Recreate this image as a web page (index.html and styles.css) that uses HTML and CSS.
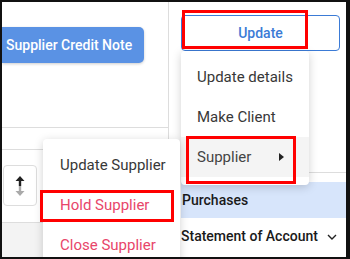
FILE: index.html
```html
<!DOCTYPE html>
<html lang="en">
<head>
    <meta charset="UTF-8">
    <title>Supplier actions</title>
    <link rel="stylesheet" href="styles.css">
</head>
<body>
    <div class="screen">
        <div class="left-panel">
            <div class="lp-top">
                <button class="btn-primary">Supplier Credit Note</button>
            </div>
            <div class="lp-row"></div>
            <div class="lp-sort">
                <div class="sort-box">
                    <svg width="12" height="22" viewBox="0 0 12 22">
                        <path d="M6 1 L1.5 6 H4.8 V11 H7.2 V6 H10.5 Z" fill="#222"/>
                        <path d="M6 21 L1.5 16 H4.8 V11 H7.2 V16 H10.5 Z" fill="#aaa"/>
                    </svg>
                </div>
            </div>
            <div class="lp-foot"></div>
        </div>

        <div class="right-panel">
            <button class="btn-outline">Update</button>
            <div class="rp-space"></div>
            <div class="rp-row active">Purchases</div>
            <div class="rp-row">Statement of Account
                <svg class="chev" width="10" height="6" viewBox="0 0 10 6">
                    <path d="M1 1 L5 5 L9 1" fill="none" stroke="#222" stroke-width="1.4"/>
                </svg>
            </div>
        </div>

        <ul class="menu menu-main">
            <li>Update details</li>
            <li>Make Client</li>
            <li class="hover">Supplier <span class="caret"></span></li>
        </ul>

        <ul class="menu menu-sub">
            <li>Update Supplier</li>
            <li class="danger">Hold Supplier</li>
            <li class="danger">Close Supplier</li>
        </ul>

        <div class="mark mark-update"></div>
        <div class="mark mark-supplier"></div>
        <div class="mark mark-hold"></div>
    </div>
</body>
</html>
```

FILE: styles.css
```css
* {
    box-sizing: border-box;
}

body {
    margin: 0;
    font-family: Roboto, 'Noto Sans', sans-serif;
    background: #fff;
}

.screen {
    position: relative;
    width: 350px;
    height: 259px;
    border-top: 2px solid #111;
    border-left: 2px solid #111;
    border-right: 4px solid #111;
    border-bottom: 2px solid #111;
    display: flex;
    overflow: hidden;
}

/* left side */
.left-panel {
    width: 167px;
    border-right: 1px solid #ddd;
    display: flex;
    flex-direction: column;
}

.lp-top {
    height: 126px;
    padding-top: 25px;
    border-bottom: 1px solid #ddd;
}

.btn-primary {
    display: block;
    width: 142px;
    height: 36px;
    border: none;
    border-radius: 0 5px 5px 0;
    background: #5a92e4;
    color: #fff;
    font-family: inherit;
    font-size: 14px;
    font-weight: 500;
    text-align: left;
    padding: 0 0 0 4px;
    box-shadow: 0 1px 3px rgba(0, 0, 0, 0.2);
}

.lp-row {
    height: 22px;
    border-bottom: 1px solid #ddd;
}

.lp-sort {
    height: 73px;
    border-bottom: 1px solid #ddd;
    padding: 15px 0 0 1px;
}

.sort-box {
    width: 34px;
    height: 41px;
    border: 1px solid #ddd;
    border-radius: 4px;
    display: flex;
    align-items: center;
    justify-content: center;
}

.lp-foot {
    flex: 1;
    background: #f3f3f3;
}

/* right side */
.right-panel {
    flex: 1;
    display: flex;
    flex-direction: column;
    padding-left: 12px;
}

.btn-outline {
    height: 36px;
    margin: 13px 6px 0 0;
    border: 1px solid #3b7bd6;
    border-radius: 4px;
    background: #fff;
    color: #3b7bd6;
    font-family: inherit;
    font-size: 14px;
    font-weight: 500;
}

.rp-space {
    height: 122px;
    border-bottom: 1px solid #ddd;
    margin-bottom: 9px;
}

.rp-row {
    height: 36px;
    display: flex;
    align-items: center;
    padding-left: 0;
    font-size: 14px;
    font-weight: 500;
    color: #1a1a1a;
}

.rp-row.active {
    background: #d7e5fb;
    padding-left: 1px;
}

.chev {
    margin-left: 9px;
    margin-top: 2px;
}

/* dropdown menus */
.menu {
    position: absolute;
    margin: 0;
    padding: 6px 0 8px;
    list-style: none;
    background: #fff;
    border-radius: 4px;
    box-shadow: 0 2px 10px rgba(0, 0, 0, 0.18);
    font-size: 15px;
    color: #383838;
}

.menu li {
    height: 40px;
    display: flex;
    align-items: center;
    padding-left: 16px;
}

.menu-main {
    left: 179px;
    top: 49px;
    width: 128px;
}

.menu-main li.hover {
    background: #f4f4f4;
    color: #444;
}

.caret {
    margin-left: 28px;
    width: 0;
    height: 0;
    border-top: 4px solid transparent;
    border-bottom: 4px solid transparent;
    border-left: 5px solid #222;
}

.menu-sub {
    left: 41px;
    top: 137px;
    width: 137px;
    z-index: 1;
}

.menu-sub li {
    padding-left: 17px;
}

.menu-sub li.danger {
    color: #e8466a;
}

/* red annotations */
.mark {
    position: absolute;
    border: 3px solid #f00;
    z-index: 2;
}

.mark-update {
    left: 180px;
    top: 8px;
    width: 126px;
    height: 39px;
}

.mark-supplier {
    left: 184px;
    top: 134px;
    width: 110px;
    height: 48px;
}

.mark-hold {
    left: 38px;
    top: 188px;
    width: 134px;
    height: 32px;
}
```
